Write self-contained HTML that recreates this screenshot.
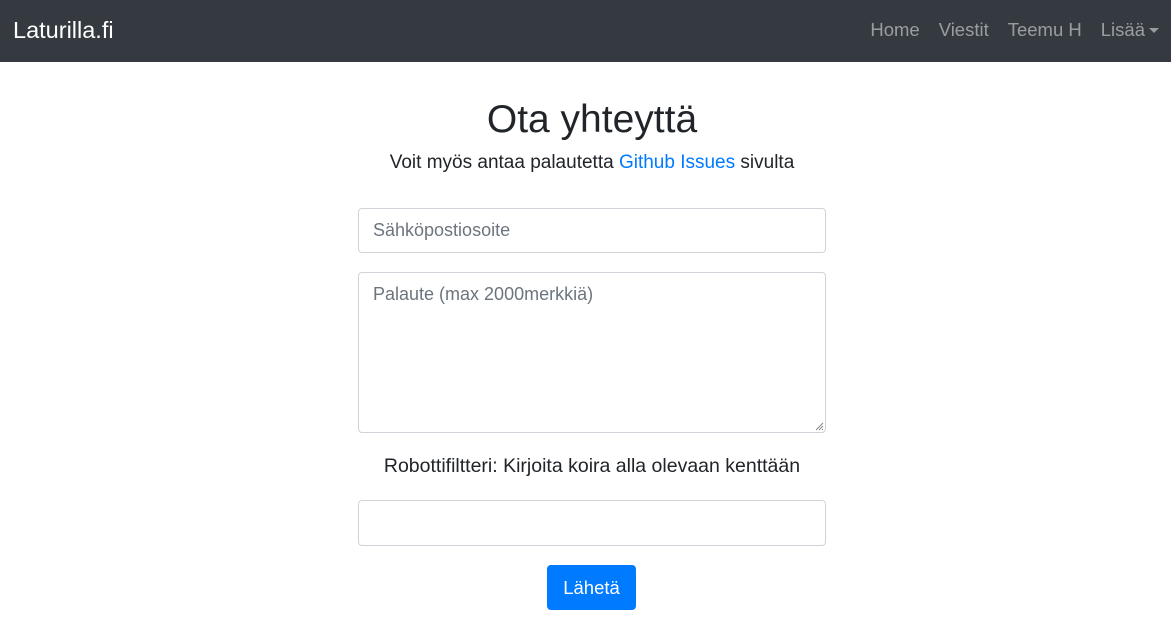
<!DOCTYPE html>
<html><head><meta charset="utf-8"><style>
*{box-sizing:border-box}
body{margin:0;width:1171px;height:619px;background:#fff;font-family:"Liberation Sans",sans-serif;color:#212529;overflow:hidden}
.nav{height:62px;background:#343a40;position:relative}
.brand{position:absolute;left:13px;top:17px;font-size:23.5px;color:#fff}
.links{position:absolute;right:12px;top:19px;font-size:18.5px;color:rgba(255,255,255,.5)}
.links span{margin-left:19px}
.caret{display:inline-block;width:0;height:0;border-left:5px solid transparent;border-right:5px solid transparent;border-top:5px solid rgba(255,255,255,.5);vertical-align:3px;margin-left:4px}
h1,.sub,.lab{left:192px;width:800px}
h1{position:absolute;top:98px;text-align:center;margin:0;font-weight:normal;font-size:39px}
.sub{position:absolute;top:152px;text-align:center;font-size:19px}
.sub a{color:#007bff;text-decoration:none}
.f{position:absolute;left:358px;width:468px;border:1px solid #ced4da;border-radius:4px;background:#fff;color:#6c757d;font-size:18px;padding:11px 14px}
.lab{position:absolute;top:455px;text-align:center;font-size:19.5px}
.btn{position:absolute;left:547px;top:565px;width:89px;height:45px;background:#007bff;border-radius:4px;color:#fff;font-size:18.5px;text-align:center;line-height:45px}
</style></head><body>
<div class="nav"><div class="brand">Laturilla.fi</div>
<div class="links"><span>Home</span><span>Viestit</span><span>Teemu H</span><span>Lisää<i class="caret"></i></span></div></div>
<h1>Ota yhteyttä</h1>
<div class="sub">Voit myös antaa palautetta <a>Github Issues</a> sivulta</div>
<div class="f" style="top:208px;height:45px">Sähköpostiosoite</div>
<div class="f" style="top:272px;height:161px">Palaute (max 2000merkkiä)
<svg style="position:absolute;right:1px;bottom:1px" width="10" height="10"><path d="M9 2L2 9M9 5L5 9M9 8L8 9" stroke="#888" stroke-width="1"/></svg></div>
<div class="lab">Robottifiltteri: Kirjoita koira alla olevaan kenttään</div>
<div class="f" style="top:500px;height:46px"></div>
<div class="btn">Lähetä</div>
</body></html>
